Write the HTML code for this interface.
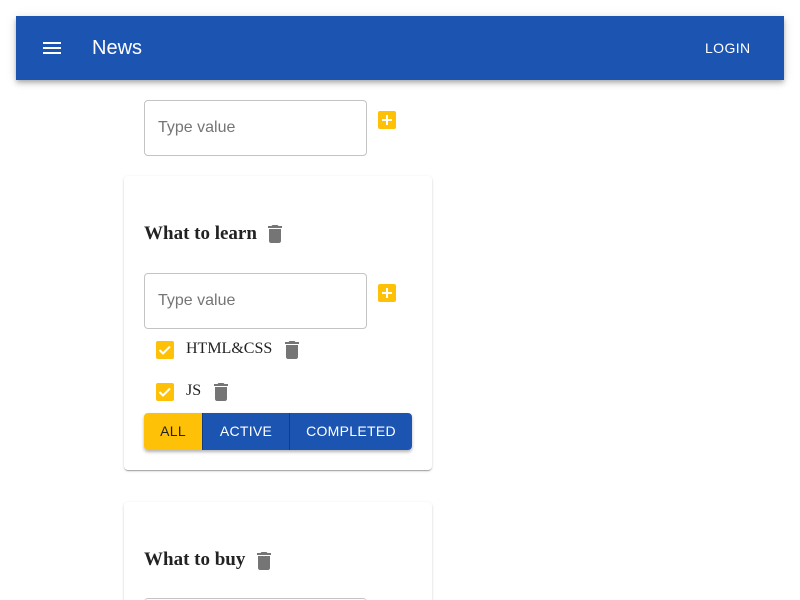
<!DOCTYPE html>
<html><head><style>
html,body{margin:0;width:800px;height:600px;overflow:hidden;}
body{background:#fff;font-family:"Liberation Sans",sans-serif;position:relative}
.a{position:absolute}
.bar{left:16px;top:16px;width:768px;height:64px;background:#1c54b2;box-shadow:0 2px 4px -1px rgba(0,0,0,.2),0 4px 5px rgba(0,0,0,.14),0 1px 10px rgba(0,0,0,.12)}
.inp{width:223px;height:56px;border:1px solid #c4c4c4;border-radius:4px;box-sizing:border-box;color:#757575;font-size:16px;padding:18px 13px;}
.plus{width:18px;height:18px;background:#ffc107;border-radius:2px}
.card{background:#fff;border-radius:4px;box-shadow:0 2px 1px -1px rgba(0,0,0,.2),0 1px 1px rgba(0,0,0,.14),0 1px 3px rgba(0,0,0,.12)}
.h{font-family:"Liberation Serif",serif;font-weight:bold;font-size:19px;color:#222}
.cb{width:18px;height:18px;background:#ffc107;border-radius:2px}
.t{font-family:"Liberation Serif",serif;font-size:16px;color:#222}
</style></head><body>
<div class="a bar">
<svg class="a" style="left:24px;top:20px" width="24" height="24" viewBox="0 0 24 24"><path fill="#fff" d="M3 18h18v-2H3v2zm0-5h18v-2H3v2zm0-7v2h18V6H3z"/></svg>
<div class="a" style="left:76px;top:21px;color:#fff;font-size:20px;font-weight:500">News</div>
<div class="a" style="left:689px;top:24px;color:#fff;font-size:14px;letter-spacing:.4px">LOGIN</div>
</div>
<svg width="0" height="0" style="position:absolute"><defs>
<symbol id="tr" viewBox="0 0 24 24"><path fill="#757575" d="M6 19c0 1.1.9 2 2 2h8c1.1 0 2-.9 2-2V7H6v12zM19 4h-3.5l-1-1h-5l-1 1H5v2h14V4z"/></symbol>
<symbol id="pl" viewBox="0 0 18 18"><path fill="#fff" d="M8 4h2v4h4v2h-4v4H8v-4H4V8h4z"/></symbol>
<symbol id="ck" viewBox="0 0 18 18"><path fill="none" stroke="#fff" stroke-width="2" d="M3.5 9l3.5 3.5 7-7"/></symbol>
</defs></svg>
<div class="a inp" style="left:144px;top:100px">Type value</div>
<svg class="a plus" style="left:378px;top:111px"><use href="#pl"/></svg>
<div class="a card" style="left:124px;top:176px;width:308px;height:294px"></div>
<div class="a h" style="left:144px;top:223px">What to learn</div>
<svg class="a" style="left:263px;top:222px" width="24" height="24"><use href="#tr"/></svg>
<div class="a inp" style="left:144px;top:273px">Type value</div>
<svg class="a plus" style="left:378px;top:284px"><use href="#pl"/></svg>
<svg class="a cb" style="left:156px;top:341px"><use href="#ck"/></svg>
<div class="a t" style="left:186px;top:340px">HTML&amp;CSS</div>
<svg class="a" style="left:280px;top:338px" width="24" height="24"><use href="#tr"/></svg>
<svg class="a cb" style="left:156px;top:383px"><use href="#ck"/></svg>
<div class="a t" style="left:186px;top:382px">JS</div>
<svg class="a" style="left:209px;top:380px" width="24" height="24"><use href="#tr"/></svg>
<div class="a" style="left:144px;top:413px;width:268px;height:37px;border-radius:4px;overflow:hidden;box-shadow:0 2px 3px rgba(0,0,0,.3);display:flex;font-size:14px;letter-spacing:.3px">
<div style="width:58px;background:#ffc107;color:#222;text-align:center;line-height:37px">ALL</div>
<div style="width:86px;background:#1c54b2;color:#fff;text-align:center;line-height:37px;border-left:1px solid #123d85">ACTIVE</div>
<div style="flex:1;background:#1c54b2;color:#fff;text-align:center;line-height:37px;border-left:1px solid #123d85">COMPLETED</div>
</div>
<div class="a card" style="left:124px;top:502px;width:308px;height:120px"></div>
<div class="a h" style="left:144px;top:549px">What to buy</div>
<svg class="a" style="left:252px;top:549px" width="24" height="24"><use href="#tr"/></svg>
<div class="a" style="left:144px;top:598px;width:223px;height:10px;border-top:1px solid #c4c4c4;border-radius:4px"></div>
</body></html>
